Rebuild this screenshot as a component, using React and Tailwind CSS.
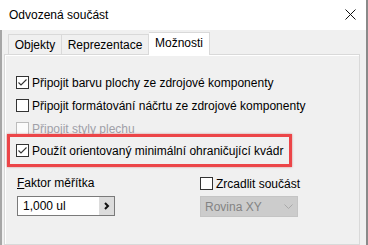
const font = { fontFamily: '"Liberation Sans", Arial, sans-serif' };

const Check = ({ checked, disabled }) => (
  <span
    className={`w-[13px] h-[13px] shrink-0 flex items-center justify-center border ${
      disabled ? "border-[#bcbcbc] bg-[#fbfbfb]" : "border-[#333333] bg-white"
    }`}
  >
    {checked && (
      <svg width="11" height="11" viewBox="0 0 11 11" fill="none">
        <path d="M1.5 5.5L4 8L9.5 2.5" stroke="#333333" strokeWidth="1.1" />
      </svg>
    )}
  </span>
);

const Row = ({ checked, disabled, children }) => (
  <label className="h-[23px] flex items-center gap-[3px] pl-[11px]">
    <Check checked={checked} disabled={disabled} />
    <span className={disabled ? "text-[#a0a0a8]" : "text-black"}>{children}</span>
  </label>
);

export default function App() {
  return (
    <div
      className="w-[368px] h-[245px] overflow-hidden flex flex-col bg-[#f0f0f0] border-r-2 border-[#8a8a8a] text-[12px] leading-none"
      style={font}
    >
      {/* title bar */}
      <div className="h-[30px] shrink-0 bg-white flex items-center justify-between pl-[9px] pr-[10px]">
        <span className="text-black">Odvozená součást</span>
        <svg width="11" height="11" viewBox="0 0 11 11" className="mb-[1px]">
          <path d="M0.5 0.5L10.5 10.5M10.5 0.5L0.5 10.5" stroke="#111" strokeWidth="1" />
        </svg>
      </div>

      {/* body */}
      <div className="flex-1 flex flex-col border-l-2 border-[#a6a6a6] pl-[2px] pr-[6px] pt-[1px]">
        {/* tabs */}
        <div className="flex items-end h-[23px] pl-[4px] relative z-10">
          <div className="h-[20px] w-[54px] border border-b-0 border-[#d9d9d9] flex items-center justify-center">
            Objekty
          </div>
          <div className="h-[20px] w-[87px] border border-b-0 border-l-0 border-[#d9d9d9] flex items-center justify-center">
            Reprezentace
          </div>
          <div className="h-[23px] w-[61px] -mb-px bg-white border border-b-0 border-l-0 border-[#d9d9d9] flex items-center justify-center pb-[2px]">
            Možnosti
          </div>
        </div>

        {/* panel */}
        <div className="flex-1 border border-[#d9d9d9] shadow-[inset_1px_1px_0_#ffffff] flex flex-col pt-[16px]">
          <Row checked>Připojit barvu plochy ze zdrojové komponenty</Row>
          <Row>Připojit formátování náčrtu ze zdrojové komponenty</Row>
          <Row disabled>Připojit styly plechu</Row>

          <div className="-mt-[6px] ml-[2px] w-[285px] h-[33px] border-[3px] border-[#ec4548] shadow-[0_0_2px_rgba(180,40,40,0.5)] flex items-center gap-[3px] pl-[6px]">
            <Check checked />
            <span className="text-black">Použít orientovaný minimální ohraničující kvádr</span>
          </div>

          <div className="flex mt-[8px] pl-[12px]">
            <div className="w-[183px] flex flex-col gap-[5px]">
              <div className="h-[16px] flex items-center text-black">
                <span>
                  <span className="underline">F</span>aktor měřítka
                </span>
              </div>
              <div className="w-[98px] h-[20px] border border-[#7a7a7a] bg-white flex">
                <span className="flex-1 flex items-center pl-[5px] text-black">1,000 ul</span>
                <span className="w-[15px] bg-[#dcdcdc] flex items-center justify-center">
                  <svg width="6" height="8" viewBox="0 0 6 8" fill="none">
                    <path d="M1 1L4 4L1 7" stroke="#111" strokeWidth="2" />
                  </svg>
                </span>
              </div>
            </div>

            <div className="flex flex-col gap-[4px]">
              <label className="h-[17px] flex items-center gap-[3px] text-black">
                <Check />
                <span>Zrcadlit součást</span>
              </label>
              <div className="w-[98px] h-[21px] bg-[#cccccc] border border-[#c4c4c4] flex items-center justify-between pl-[4px] pr-[4px]">
                <span className="text-[#838383]">Rovina XY</span>
                <svg width="9" height="5" viewBox="0 0 9 5" fill="none">
                  <path d="M0.5 0.5L4.5 4.5L8.5 0.5" stroke="#a9a9a9" strokeWidth="1" />
                </svg>
              </div>
            </div>
          </div>
        </div>
      </div>
    </div>
  );
}
